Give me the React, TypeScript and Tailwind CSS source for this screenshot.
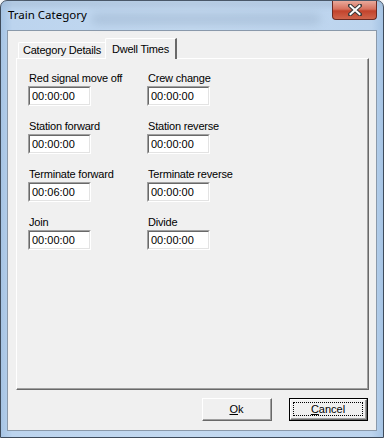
import React from "react";

const sans = { fontFamily: '"Liberation Sans", Arial, sans-serif' };

function Field({ label, value }: { label: string; value: string }) {
  return (
    <div className="flex flex-col">
      <div className="h-[15px] pl-[1px] text-[11px] leading-[15px] tracking-[-0.2px] text-black">{label}</div>
      <div className="h-[20px] w-[63px] border-t border-l border-[#a0a0a0] border-b border-r border-b-white border-r-white">
        <div className="h-full w-full border-t border-l border-[#696969] border-b border-r border-b-[#e3e3e3] border-r-[#e3e3e3] bg-white pl-[2px] text-[11px] leading-[16px] text-black">
          {value}
        </div>
      </div>
    </div>
  );
}

function Btn({ children, def, w }: { children: React.ReactNode; def?: boolean; w: string }) {
  const inner = (
    <div className="h-full w-full border-t border-l border-white border-b border-r border-b-[#696969] border-r-[#696969]">
      <div className="flex h-full w-full items-center justify-center border-b border-r border-[#a0a0a0] border-t-0 border-l-0 p-[2px]">
        <div
          className={
            "flex h-full w-full items-center justify-center text-[11px] text-black " +
            (def ? "border border-dotted border-black" : "border border-transparent")
          }
        >
          {children}
        </div>
      </div>
    </div>
  );
  return (
    <div className={"h-[23px] bg-[#f0f0f0] " + w + (def ? " border border-black" : "")}>{inner}</div>
  );
}

export default function App() {
  const rows: [string, string, string, string][] = [
    ["Red signal move off", "00:00:00", "Crew change", "00:00:00"],
    ["Station forward", "00:00:00", "Station reverse", "00:00:00"],
    ["Terminate forward", "00:06:00", "Terminate reverse", "00:00:00"],
    ["Join", "00:00:00", "Divide", "00:00:00"],
  ];
  return (
    <div className="h-[438px] w-[384px] bg-white" style={sans}>
      <div className="relative flex h-[438px] w-[384px] flex-col rounded-t-[7px] border border-[#3e4b5b] bg-[linear-gradient(90deg,#a6c4e4_0%,#bcd4ee_3%,#c3d9f0_50%,#bcd4ee_97%,#a6c4e4_100%)]">
        {/* blurred background hints in glass */}
        <div className="pointer-events-none absolute left-[90px] top-[12px] h-[12px] w-[230px] rounded-full bg-[#93aac4] opacity-40 blur-[4px]" />
        <div className="pointer-events-none absolute left-[0px] top-[0px] h-[5px] w-[382px] bg-[#8a9fb6] opacity-40 blur-[3px]" />
        {/* title row */}
        <div className="relative flex h-[29px] items-start justify-between">
          <div
            className="pl-[7px] pt-[6px] text-[11.5px] leading-[16px] text-black"
            style={{ fontFamily: '"Noto Sans", "Open Sans", sans-serif' }}
          >
            Train Category
          </div>
          <div className="mr-[6px] flex h-[19px] w-[45px] items-center justify-center rounded-b-[4px] border border-t-0 border-[#6b2a22] bg-[linear-gradient(180deg,#e9a99b_0%,#d7715e_45%,#c2432c_55%,#d0654c_100%)]">
            <svg width="14" height="12" viewBox="0 0 14 12">
              <path d="M2 1.5 L12 10.5 M12 1.5 L2 10.5" stroke="#3a3a3a" strokeWidth="4" strokeLinecap="square" />
              <path d="M2.5 2 L11.5 10 M11.5 2 L2.5 10" stroke="#ffffff" strokeWidth="2" strokeLinecap="square" />
            </svg>
          </div>
        </div>
        {/* client area */}
        <div className="mx-[6px] mb-[6px] flex flex-1 flex-col border border-[#8a99aa] bg-[#f0f0f0] pl-[8px] pr-[7px] pt-[7px]">
          {/* tabs */}
          <div className="flex h-[20px] items-end pl-[2px]">
            <div className="flex h-[16px] w-[88px] items-center justify-center rounded-tl-[2px] border-t border-l border-white border-r border-r-[#696969] text-[11px] tracking-[-0.2px] text-black">
              Category Details
            </div>
            <div className="relative z-10 -mb-px -ml-[1px] flex h-[21px] w-[72px] items-start justify-center rounded-tl-[2px] border-t border-l border-white border-r-2 border-r-[#696969] bg-[#f0f0f0] pt-[2px] text-[11px] tracking-[-0.2px] text-black">
              Dwell Times
            </div>
          </div>
          {/* panel */}
          <div className="h-[332px] border-t border-l border-white border-b border-r border-b-[#696969] border-r-[#696969]">
            <div className="h-full w-full border-b border-r border-[#a0a0a0] border-t-0 border-l-0 pl-[11px] pt-[12px]">
              <div className="flex flex-col gap-[13px]">
                {rows.map((r) => (
                  <div key={r[0]} className="grid grid-cols-[119px_100px]">
                    <Field label={r[0]} value={r[1]} />
                    <Field label={r[2]} value={r[3]} />
                  </div>
                ))}
              </div>
            </div>
          </div>
          {/* buttons */}
          <div className="mt-[8px] flex justify-end gap-[17px] pr-[1px]">
            <Btn w="w-[70px]">
              <span>
                <span className="underline">O</span>k
              </span>
            </Btn>
            <Btn w="w-[79px]" def>
              <span>
                <span className="underline">C</span>ancel
              </span>
            </Btn>
          </div>
        </div>
      </div>
    </div>
  );
}
